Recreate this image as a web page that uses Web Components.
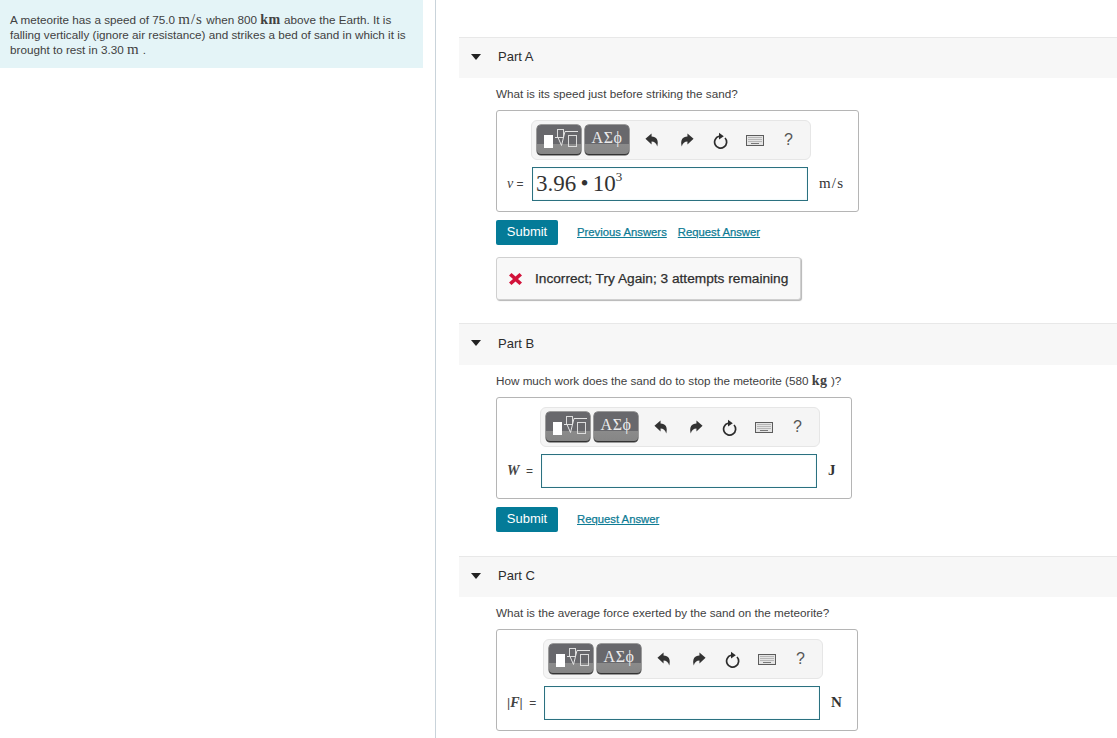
<!DOCTYPE html>
<html>
<head>
<meta charset="utf-8">
<title>Meteorite</title>
<style>
html, body { margin: 0; padding: 0; height: 100%; overflow: hidden; background: white; }
body { font-family: "Liberation Sans", Arial, sans-serif; font-size: 11.7px; color: #414141; }
.u { font-family: "Liberation Serif", serif; font-size: 15px; letter-spacing: 1px; }
.ub { font-family: "Liberation Serif", serif; font-size: 14px; font-weight: 700; letter-spacing: .6px; }
i { font-family: "Liberation Serif", serif; font-size: 14px; }
</style>
</head>
<body>

<m-page>
  <m-problem slot="problem">A meteorite has a speed of 75.0 <span class="u">m/s</span> when 800 <span class="ub">km</span> above the Earth. It is falling vertically (ignore air resistance) and strikes a bed of sand in which it is brought to rest in 3.30 <span class="u">m</span> .</m-problem>

  <m-part titulo="Part A" style="--head: 41px; --after: 23px">
    <span slot="question">What is its speed just before striking the sand?</span>
    <m-answer unit="m/s" value="3.96 • 10" sup="3" style="--label-w: 17px"><span slot="label"><i>v</i>&nbsp;=</span></m-answer>
    <m-actions previous></m-actions>
    <m-feedback>Incorrect; Try Again; 3 attempts remaining</m-feedback>
  </m-part>

  <m-part titulo="Part B" style="--head: 42px; --after: 24px">
    <span slot="question">How much work does the sand do to stop the meteorite (580 <span class="ub">kg</span> )?</span>
    <m-answer unit="J" style="--label-w: 26px"><span slot="label"><i style="font-weight:700">W</i>&nbsp;&nbsp;=</span></m-answer>
    <m-actions></m-actions>
  </m-part>

  <m-part titulo="Part C" style="--head: 41px; --after: 0px">
    <span slot="question">What is the average force exerted by the sand on the meteorite?</span>
    <m-answer unit="N" style="--label-w: 29px"><span slot="label">|<i style="font-weight:700">F</i>|&nbsp;&nbsp;=</span></m-answer>
  </m-part>
</m-page>

<script>
class pageComponent extends HTMLElement {
    constructor() {
        super();
        this.attachShadow({mode: 'open'});
    }

    connectedCallback() {
        this.shadowRoot.innerHTML = `
        <div class="left"><slot name="problem"></slot></div>
        <div class="right"><slot></slot></div>

        <style>
:host {
    display: flex;
    align-items: flex-start;
    height: 738px;
}

.left {
    width: 423px;
    flex: none;
}

.right {
    flex: 1;
    height: 701px;
    margin-left: 12px;
    border-left: 1px solid #c9d3da;
    padding: 37px 0 0 23px;
}
        </style>
        `
    }
}

class problemComponent extends HTMLElement {
    constructor() {
        super();
        this.attachShadow({mode: 'open'});
    }

    connectedCallback() {
        this.shadowRoot.innerHTML = `
        <slot></slot>
        <style>
:host {
    display: block;
    background: #e4f4f7;
    padding: 12px 10px 11px 10px;
    line-height: 15px;
    height: 45px;
}
        </style>
        `
    }
}

class partComponent extends HTMLElement {
    constructor() {
        super();
        this.attachShadow({mode: 'open'});
    }

    connectedCallback() {
        this.shadowRoot.innerHTML = `
        <div class="head">
          <svg class="arrow" width="10" height="6" viewBox="0 0 10 6"><path d="M0 0H10L5 6Z" fill="#222"/></svg>
          <span class="titulo">${this.getAttribute('titulo')}</span>
        </div>
        <div class="body">
          <div class="question"><slot name="question"></slot></div>
          <slot></slot>
        </div>

        <style>
:host {
    display: block;
    margin-bottom: var(--after);
}

.head {
    display: flex;
    align-items: center;
    height: var(--head);
    background: #f7f7f7;
    border-top: 1px solid #e8e8e8;
    box-sizing: border-box;
    padding: 0 0 3px 12px;
}

.titulo {
    font-size: 13px;
    color: #2c2c2c;
    margin-left: 17px;
}

.body {
    padding: 8px 0 0 37px;
}

.question {
    line-height: 15px;
    margin-bottom: 9px;
}
        </style>
        `
    }
}

class toolbarComponent extends HTMLElement {
    constructor() {
        super();
        this.attachShadow({mode: 'open'});
    }

    connectedCallback() {
        this.shadowRoot.innerHTML = `
        <div class="btn">
          <svg width="44" height="30" viewBox="0 0 44 30">
            <rect x="7" y="10" width="9" height="13" fill="#fff"/>
            <rect x="20.500" y="4.500" width="6" height="8" fill="none" stroke="#dcdcdc"/>
            <path d="M18 12.500h3l3.500 8L28 6.500h13" fill="none" stroke="#e4e4e4"/>
            <rect x="31.500" y="10.500" width="8" height="11" fill="none" stroke="#dcdcdc"/>
          </svg>
        </div>
        <div class="btn sym">ΑΣϕ</div>
        <svg class="ic" style="margin-left:16px" width="14" height="14" viewBox="0 0 16 16"><path d="M.5 6.500 7.500.5v3.600c5.500 0 8.500 4 6.500 11.400-1-4-3.500-5.700-6.500-5.700v3.400Z" fill="#333"/></svg>
        <svg class="ic" style="margin-left:21px" width="14" height="14" viewBox="0 0 16 16"><path d="M15.500 6.500 8.500.5v3.600c-5.500 0-8.500 4-6.500 11.400 1-4 3.500-5.700 6.500-5.700v3.400Z" fill="#333"/></svg>
        <svg class="ic" style="margin-left:19px" width="15" height="17" viewBox="0 0 15 17"><path d="M6 4.300a6 6 0 1 0 6 1.700" fill="none" stroke="#2c2c2c" stroke-width="1.700"/><path d="M6 .8 10.800 4.200 6 7.600Z" fill="#2c2c2c"/></svg>
        <svg class="ic" style="margin-left:18px" width="18" height="11" viewBox="0 0 18 11"><rect x=".5" y=".5" width="17" height="10" fill="#e4e4e4" stroke="#5c5c5c"/><path d="M2.500 2.500h13M2.500 4.500h13M2.500 6.500h13" stroke="#888" stroke-dasharray="1 1"/><path d="M5 8.500h8" stroke="#777"/></svg>
        <span class="help">?</span>

        <style>
:host {
    display: flex;
    align-items: center;
    box-sizing: border-box;
    height: 40px;
    background: #f5f5f5;
    border: 1px solid #e6e6e6;
    border-radius: 6px;
    padding: 0 5px;
    margin: 0 -3px 0 -1px;
}

.btn {
    width: 44px;
    height: 30px;
    margin-right: 3px;
    border-radius: 4px;
    box-sizing: border-box;
    background: linear-gradient(#68686c 0, #68686c 63%, #8b8b8b 63%, #858585 100%);
    box-shadow: inset 0 -1px 0 #333, 0 0 0 .5px #444;
    display: flex;
    align-items: flex-start;
    justify-content: center;
    flex: none;
}

.sym {
    margin-right: 0;
    margin-left: 1px;
    color: #ececec;
    font-family: "Liberation Serif", serif;
    font-size: 16px;
    line-height: 25px;
    letter-spacing: .5px;
}

.ic { flex: none; }

.help {
    margin-left: 20px;
    font-size: 16px;
    color: #555;
    font-family: "Liberation Sans", Arial, sans-serif;
}
        </style>
        `
    }
}

class answerComponent extends HTMLElement {
    constructor() {
        super();
        this.attachShadow({mode: 'open'});
    }

    connectedCallback() {
        const value = this.getAttribute('value') || '';
        const sup = this.getAttribute('sup');
        this.shadowRoot.innerHTML = `
        <span></span>
        <m-toolbar></m-toolbar>
        <span></span>
        <div class="label"><slot name="label"></slot></div>
        <div class="input">${value}${sup ? `<sup>${sup}</sup>` : ''}</div>
        <div class="unit">${this.getAttribute('unit')}</div>

        <style>
:host {
    display: grid;
    width: fit-content;
    grid-template-columns: var(--label-w) 276px auto;
    column-gap: 8px;
    row-gap: 7px;
    border: 1px solid #b5b5b5;
    border-radius: 3px;
    padding: 9px 14px 10px 10px;
    align-items: center;
}

.label {
    font-size: 12px;
    color: #444;
    white-space: nowrap;
}

.input {
    box-sizing: border-box;
    height: 34px;
    border: 1px solid #2b7180;
    box-shadow: inset 0 0 2px #d8f0f3;
    padding-left: 3px;
    font-family: "Liberation Serif", serif;
    font-size: 23px;
    line-height: 32px;
    word-spacing: -1.500px;
    color: #333;
    background: white;
}

sup {
    font-size: 13px;
    line-height: 0;
    vertical-align: 10px;
}

.unit {
    margin: 0 0 1px 3px;
    font-family: "Liberation Serif", serif;
    font-size: 15px;
    letter-spacing: 1.200px;
    font-weight: ${this.getAttribute('unit') === 'm/s' ? 400 : 700};
    color: #333;
}
        </style>
        `
    }
}

class actionsComponent extends HTMLElement {
    constructor() {
        super();
        this.attachShadow({mode: 'open'});
    }

    connectedCallback() {
        const previous = this.hasAttribute('previous');
        this.shadowRoot.innerHTML = `
        <button>Submit</button>
        ${previous ? '<a href="#">Previous Answers</a>' : ''}
        <a href="#">Request Answer</a>

        <style>
:host {
    display: flex;
    align-items: center;
    margin-top: 8px;
}

button {
    width: 62px;
    height: 25px;
    border: 0;
    border-radius: 2px;
    background: #047b98;
    color: white;
    font-family: "Liberation Sans", Arial, sans-serif;
    font-size: 13px;
    padding: 0 0 2px;
    margin-right: 19px;
}

a {
    color: #0f7c95;
    font-size: 11.300px;
    margin: 0 11px 2px 0;
    -webkit-text-stroke: .25px #0f7c95;
}
        </style>
        `
    }
}

class feedbackComponent extends HTMLElement {
    constructor() {
        super();
        this.attachShadow({mode: 'open'});
    }

    connectedCallback() {
        this.shadowRoot.innerHTML = `
        <svg width="13" height="12" viewBox="0 0 13 12"><path d="M2.500 0 6.500 3.500 10.500 0 13 2.500 9 6l4 3.500L10.500 12 6.500 8.500 2.500 12 0 9.500 4 6 0 2.500Z" fill="#d2123a"/></svg>
        <span><slot></slot></span>

        <style>
:host {
    display: flex;
    align-items: center;
    box-sizing: border-box;
    height: 43px;
    margin-top: 12px;
    width: 305px;
    padding-left: 12px;
    background: #f8f8f8;
    border: 1px solid #d0d0d0;
    border-radius: 3px;
    box-shadow: 1px 1px 1px #b5b5b5;
}

span {
    margin-left: 13px;
    font-size: 13.700px;
    -webkit-text-stroke: .25px #2e2e2e;
    color: #2e2e2e;
    white-space: nowrap;
}
        </style>
        `
    }
}

customElements.define('m-toolbar', toolbarComponent);
customElements.define('m-answer', answerComponent);
customElements.define('m-actions', actionsComponent);
customElements.define('m-feedback', feedbackComponent);
customElements.define('m-problem', problemComponent);
customElements.define('m-part', partComponent);
customElements.define('m-page', pageComponent);
</script>
</body>
</html>
